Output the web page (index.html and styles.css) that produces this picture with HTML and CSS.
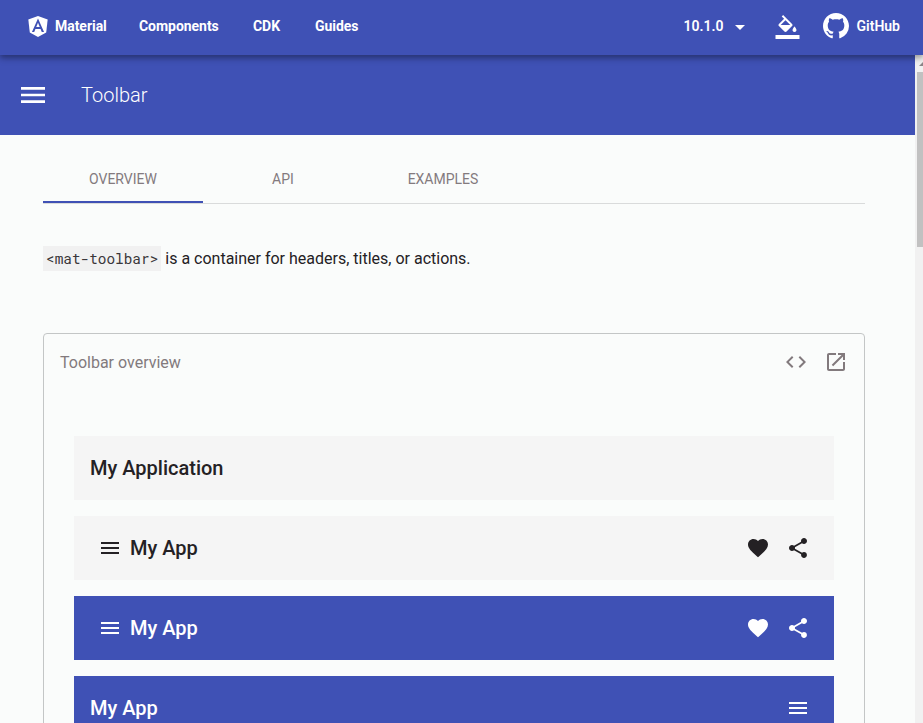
FILE: index.html
```html
<!DOCTYPE html>
<html lang="en">
<head>
<meta charset="utf-8">
<title>Toolbar | Angular Material</title>
<link rel="stylesheet" href="styles.css">
</head>
<body>
<svg class="defs" width="0" height="0" aria-hidden="true">
  <symbol id="menu" viewBox="0 0 24 24"><path d="M3 18h18v-2H3v2zm0-5h18v-2H3v2zm0-7v2h18V6H3z"/></symbol>
  <symbol id="heart" viewBox="0 0 24 24"><path d="M12 21.35l-1.45-1.32C5.4 15.36 2 12.28 2 8.5 2 5.42 4.42 3 7.5 3c1.74 0 3.41.81 4.5 2.09C13.09 3.81 14.76 3 16.5 3 19.58 3 22 5.42 22 8.5c0 3.78-3.4 6.86-8.55 11.54L12 21.35z"/></symbol>
  <symbol id="share" viewBox="0 0 24 24"><path d="M18 16.08c-.76 0-1.44.3-1.96.77L8.91 12.7c.05-.23.09-.46.09-.7s-.04-.47-.09-.7l7.05-4.11c.54.5 1.25.81 2.04.81 1.66 0 3-1.34 3-3s-1.34-3-3-3-3 1.34-3 3c0 .24.04.47.09.7L8.04 9.81C7.5 9.31 6.79 9 6 9c-1.66 0-3 1.34-3 3s1.34 3 3 3c.79 0 1.5-.31 2.04-.81l7.12 4.16c-.05.21-.08.43-.08.65 0 1.61 1.31 2.92 2.92 2.92 1.61 0 2.92-1.31 2.92-2.92s-1.31-2.92-2.92-2.92z"/></symbol>
</svg>
<div class="app">
  <header class="navbar">
    <a class="brand">
      <svg class="logo" viewBox="0 0 250 250"><path class="shield" d="M125 30L31.900 63.200l14.200 123.100L125 230l78.900-43.700 14.200-123.100z"/><path class="mark" d="M125 52.100L66.800 182.600h21.700l11.700-29.200h49.400l11.700 29.200H183L125 52.100zm17 83.300h-34l17-40.900 17 40.900z"/></svg>
      <span>Material</span>
    </a>
    <nav class="links">
      <a class="components">Components</a>
      <a class="cdk">CDK</a>
      <a>Guides</a>
    </nav>
    <div class="tools">
      <span class="version">10.1.0</span>
      <svg class="caret" viewBox="0 0 10 5"><path d="M0 0h10L5 5z"/></svg>
      <svg class="theme" viewBox="0 0 24 24"><path d="M16.560 8.940L7.620 0 6.210 1.410l2.380 2.380-5.150 5.150c-.59.59-.59 1.540 0 2.120l5.500 5.500c.29.29.68.44 1.060.44s.77-.15 1.060-.44l5.500-5.500c.59-.58.59-1.530 0-2.120zM5.210 10L10 5.210 14.790 10H5.210zM19 11.500s-2 2.170-2 3.500c0 1.100.9 2 2 2s2-.9 2-2c0-1.330-2-3.500-2-3.500zM0 20h24v4H0z"/></svg>
      <svg class="octocat" viewBox="0 0 16 16"><path d="M8 0C3.580 0 0 3.580 0 8c0 3.540 2.290 6.530 5.470 7.590.4.070.55-.17.55-.38 0-.19-.01-.82-.01-1.490-2.010.37-2.530-.49-2.690-.94-.09-.23-.48-.94-.82-1.130-.28-.15-.68-.52-.01-.53.63-.01 1.080.58 1.230.82.72 1.210 1.870.87 2.330.66.07-.52.28-.87.51-1.070-1.780-.2-3.640-.89-3.640-3.950 0-.87.31-1.590.82-2.150-.08-.2-.36-1.020.08-2.120 0 0 .67-.21 2.200.82.64-.18 1.320-.27 2-.27s1.360.09 2 .27c1.530-1.040 2.200-.82 2.200-.82.44 1.100.16 1.920.08 2.120.51.56.82 1.270.82 2.150 0 3.070-1.870 3.750-3.650 3.950.29.25.54.73.54 1.480 0 1.070-.01 1.930-.01 2.200 0 .21.15.46.55.38A8.010 8.010 0 0 0 16 8c0-4.420-3.580-8-8-8z"/></svg>
      <span>GitHub</span>
    </div>
  </header>
  <div class="body">
    <main class="page">
      <div class="title-bar">
        <svg class="title-menu" viewBox="0 0 24 16"><path d="M0 0h24v2.700H0zM0 6.650h24v2.700H0zM0 13.300h24V16H0z"/></svg>
        <h1>Toolbar</h1>
      </div>
      <div class="content">
        <nav class="tabs">
          <a class="tab active">OVERVIEW</a>
          <a class="tab">API</a>
          <a class="tab">EXAMPLES</a>
        </nav>
        <p class="intro"><code>&lt;mat-toolbar&gt;</code><span>is a container for headers, titles, or actions.</span></p>
        <section class="example">
          <div class="example-head">
            <span class="example-title">Toolbar overview</span>
            <svg class="icon" viewBox="0 0 24 24"><path d="M9.400 16.600L4.800 12l4.600-4.600L8 6l-6 6 6 6 1.400-1.400zm5.200 0l4.600-4.600-4.600-4.600L16 6l6 6-6 6-1.400-1.400z"/></svg>
            <svg class="icon" viewBox="0 0 24 24"><path d="M19 19H5V5h7V3H5c-1.110 0-2 .9-2 2v14c0 1.100.89 2 2 2h14c1.100 0 2-.9 2-2v-7h-2v7zM14 3v2h3.590l-9.830 9.830 1.410 1.410L19 6.410V10h2V3h-7z"/></svg>
          </div>
          <div class="toolbars">
            <div class="toolbar"><span class="name">My Application</span></div>
            <div class="toolbar with-menu">
              <svg class="icon"><use href="#menu"/></svg><span class="name">My App</span>
              <svg class="icon"><use href="#heart"/></svg><svg class="icon last"><use href="#share"/></svg>
            </div>
            <div class="toolbar with-menu primary">
              <svg class="icon"><use href="#menu"/></svg><span class="name">My App</span>
              <svg class="icon"><use href="#heart"/></svg><svg class="icon last"><use href="#share"/></svg>
            </div>
            <div class="toolbar primary">
              <span class="name">My App</span><svg class="icon last"><use href="#menu"/></svg>
            </div>
          </div>
        </section>
      </div>
    </main>
    <div class="scrollbar">
      <svg class="arrow" viewBox="0 0 8 17"><path d="M4 11l4-4v4z"/></svg>
      <div class="thumb"></div>
    </div>
  </div>
</div>
</body>
</html>
```
FILE: styles.css
```css
* { box-sizing: border-box; }
html, body { margin: 0; height: 100%; overflow: hidden; }
body { font-family: Roboto, "Liberation Sans", sans-serif; background: #fafcfb; color: #242124; }
svg { flex: none; display: block; fill: currentColor; }
.defs { position: absolute; }

.app { display: flex; flex-direction: column; height: 723px; overflow: hidden; }
.navbar { position: relative; z-index: 2; flex: none; display: flex; align-items: center; height: 55px; padding: 0 23px 3px 25px; background: #3f51b5; color: #fff; font-size: 14px; font-weight: 700; line-height: 20px; letter-spacing: -.04px; box-shadow: 0 3px 5px rgba(0,0,0,.25), 0 2px 9px rgba(0,0,0,.18); }
.brand { display: flex; align-items: center; width: 114px; }
.logo { width: 26px; height: 26px; margin-right: 4px; }
.mark { fill: #3f51b5; }
.links { display: flex; flex: 1; }
.components { width: 114px; }
.cdk { width: 62px; }
.tools { display: flex; align-items: center; font-weight: 600; letter-spacing: 0; }
.caret { width: 10px; height: 5px; margin: 2px 30px 0 11px; }
.theme { width: 25px; height: 24px; margin: 1px 23px 0 0; }
.octocat { width: 26px; height: 26px; margin-right: 8px; }

.body { display: flex; flex: 1; min-height: 0; }
.page { flex: 1; min-width: 0; overflow: hidden; }
.title-bar { display: flex; align-items: center; height: 80px; padding-left: 21px; background: #3f51b5; color: #fff; }
.title-menu { width: 24px; height: 16px; margin-right: 36px; }
h1 { margin: 0; font-size: 20px; font-weight: 300; line-height: 24px; }
.content { padding: 20px 50px 0 43px; }
.tabs { display: flex; height: 49px; border-bottom: 1px solid #d9dbdb; }
.tab { width: 160px; height: 48px; text-align: center; font-size: 14px; line-height: 48px; color: #837a7e; }
.active { border-bottom: 2px solid #3f51b5; }
.intro { display: flex; align-items: center; height: 25px; margin: 42px 0 62px; font-size: 16px; }
code { height: 25px; padding: 0 3px; margin-right: 4px; background: #f1f1f1; color: #3a373a; font: 14.400px/26px "Roboto Mono", "DejaVu Sans Mono", monospace; }

.example { height: 500px; border: 1px solid #c3c6c6; border-radius: 4px; }
.example-head { display: flex; align-items: center; gap: 16px; height: 56px; padding: 0 16px; color: #827a7d; }
.example-title { flex: 1; margin-top: 2px; font-size: 16px; line-height: 20px; }
.icon { width: 24px; height: 24px; }
.toolbars { display: flex; flex-direction: column; gap: 16px; padding: 46px 30px 0; }
.toolbar { display: flex; align-items: center; height: 64px; padding: 0 16px; background: #f5f5f5; font-size: 20px; font-weight: 500; }
.toolbar.with-menu { padding-left: 24px; }
.primary { background: #3f51b5; color: #fff; }
.name { flex: 1; }
.with-menu .name { margin-left: 8px; }
.last { margin: 0 8px 0 16px; }

.scrollbar { width: 8px; background: #f1f1f1; color: #8c8689; }
.arrow { width: 8px; height: 17px; }
.thumb { height: 175px; margin-left: 2px; background: #c1c1c1; }
```
